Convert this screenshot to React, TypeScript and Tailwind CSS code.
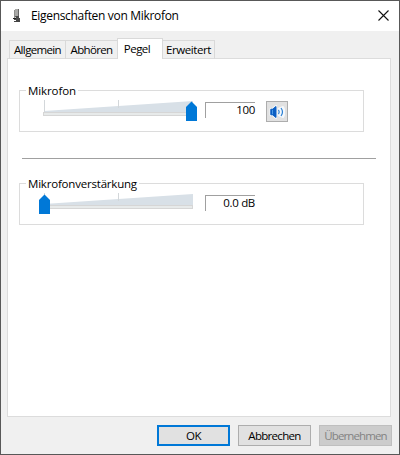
import React from 'react';
import clsx from 'clsx';

interface LevelGroupProps {
  title: string;
  titleClass: string;
  value: string;
  atMax?: boolean;
  children?: React.ReactNode;
}

const tabs = [
  { label: 'Allgemein', box: 'w-[57px]', text: 'tracking-[-0.65px]' },
  { label: 'Abhören', box: 'w-[53px] -ml-px', text: 'tracking-[-0.65px]' },
  { label: 'Pegel', box: 'w-[46px] -ml-px pr-[6px]', text: 'tracking-[-0.5px]', active: true },
  { label: 'Erweitert', box: 'w-[53px] -ml-px', text: 'tracking-[-0.4px]' },
];

const MicIcon: React.FC = () => (
  <svg width="12" height="16" viewBox="0 0 12 16" className="shrink-0">
    <path d="M4 1H7V9H4Z" fill="#a9a9a7" />
    <path d="M3 2H4V10H3Z" fill="#8f8f8d" />
    <path d="M7 1H8V9H7Z" fill="#666" />
    <path d="M4 8H8V10H9V13H5V12H3V10H5Z" fill="#4a4a4a" />
    <path d="M2 10H5V11H2Z" fill="#222" />
    <path d="M5 12H8V13H9V14H3V13H5Z" fill="#444" />
  </svg>
);

const SpeakerIcon: React.FC = () => (
  <svg width="16" height="16" viewBox="0 0 16 16">
    <path
      d="M1.5 5H3.5L7 2V14L3.5 11H1.5Z M9.5 5V11L14 13Q17 8 14 3Z"
      fill="#f4f8fc"
      stroke="#f4f8fc"
      strokeWidth="2"
      strokeLinejoin="round"
    />
    <path d="M1.8 5.2H3.5L7 2.5V13.5L3.5 10.8H1.8Z" fill="#0b5fc4" stroke="#0b5fc4" strokeLinejoin="round" />
    <path d="M3.5 6V10" stroke="#4c9be6" />
    <path d="M9.5 5.8Q11 8 9.5 10.2" fill="none" stroke="#2a7fd4" strokeWidth="1.2" />
    <path d="M12 4Q15 8 12 12" fill="none" stroke="#2a7fd4" strokeWidth="1.2" />
  </svg>
);

const Slider: React.FC<{ atMax?: boolean }> = ({ atMax }) => (
  <svg width="160" height="24" viewBox="0 0 160 24" className="shrink-0">
    <path d="M6 12L155 2V13H6Z" fill="#d8e0e7" />
    <path d="M6.5 1V13M80.5 1V9" stroke="#d3d7da" />
    <rect x="5.5" y="13.5" width="149" height="3" fill="#e7eaea" stroke="#d6d6d6" />
    <path
      d={atMax ? 'M148 8L153.5 2.5L159 8V22H148Z' : 'M1 8L6.5 2.5L12 8V22H1Z'}
      fill="#0078d7"
    />
  </svg>
);

const LevelGroup: React.FC<LevelGroupProps> = ({ title, titleClass, value, atMax, children }) => (
  <section className="relative ml-[11px] h-[42px] w-[345px] border border-[#dcdcdc]">
    <h2 className={clsx('absolute -top-[8px] left-[6px] h-4 bg-white px-[2px] text-[11.5px] leading-4', titleClass)}>
      {title}
    </h2>
    <div className="flex items-start pt-[8px] pl-[18px]">
      <Slider atMax={atMax} />
      <div className="mt-[3px] ml-[7px] h-4 w-[50px] border-t border-l border-[#a0a0a0] text-right text-[11.5px] leading-[13px] tracking-[-0.3px]">
        {value}
      </div>
      {children}
    </div>
  </section>
);

const App: React.FC = () => {
  return (
    <div className="flex h-[455px] w-[400px] flex-col border border-[#585858] bg-[#f0f0f0] font-['Open_Sans','Noto_Sans',sans-serif] text-black">
      {/* Title bar */}
      <header className="flex h-[30px] shrink-0 items-center bg-white pr-[10px] pl-[10px]">
        <MicIcon />
        <h1 className="ml-[8px] text-[12px] leading-4 tracking-[-0.32px] whitespace-nowrap">
          Eigenschaften von Mikrofon
        </h1>
        <button className="ml-auto -mt-[2px]" aria-label="Schließen">
          <svg width="11" height="11" viewBox="0 0 11 11">
            <path d="M0.5 0.5L10.5 10.5M10.5 0.5L0.5 10.5" stroke="#111" strokeWidth="1.1" />
          </svg>
        </button>
      </header>

      {/* Tabs */}
      <nav className="z-10 mt-[7px] ml-[8px] flex h-[21px] shrink-0 items-end">
        {tabs.map((tab) => (
          <button
            key={tab.label}
            className={clsx(
              'border border-[#d9d9d9] text-center text-[11.5px] whitespace-nowrap',
              tab.box,
              tab.text,
              tab.active ? 'z-10 h-[21px] border-b-0 bg-white pb-px leading-[18px]' : 'h-[19px] border-b-0 leading-[18px]'
            )}
          >
            {tab.label}
          </button>
        ))}
      </nav>

      {/* Tab page */}
      <main className="mx-[6px] -mt-px h-[359px] w-[384px] shrink-0 border border-[#dcdcdc] bg-white pt-[31px]">
        <LevelGroup title="Mikrofon" titleClass="tracking-[-0.1px]" value="100" atMax>
          <button className="mt-[2px] ml-[11px] flex h-[21px] w-[22px] items-center justify-center border border-[#adadad] bg-[#e1e1e1]">
            <SpeakerIcon />
          </button>
        </LevelGroup>
        <hr className="mt-[26px] ml-[14px] w-[354px] border-[#a0a0a0]" />
        <div className="h-[24px]" />
        <LevelGroup title="Mikrofonverstärkung" titleClass="tracking-[-0.2px]" value="0.0 dB" />
      </main>

      {/* Buttons */}
      <footer className="mt-[8px] flex justify-end gap-[8px] pr-[7px] text-[11.5px] leading-4">
        <button className="h-[21px] w-[73px] border-2 border-[#0078d7] bg-[#e1e1e1] tracking-[-0.4px]">OK</button>
        <button className="h-[21px] w-[73px] border border-[#adadad] bg-[#e1e1e1] tracking-[-0.7px]">Abbrechen</button>
        <button disabled className="h-[21px] w-[73px] border border-[#bfbfbf] bg-[#cccccc] tracking-[-0.9px] text-[#838383]">
          Übernehmen
        </button>
      </footer>
    </div>
  );
};

export default App;
